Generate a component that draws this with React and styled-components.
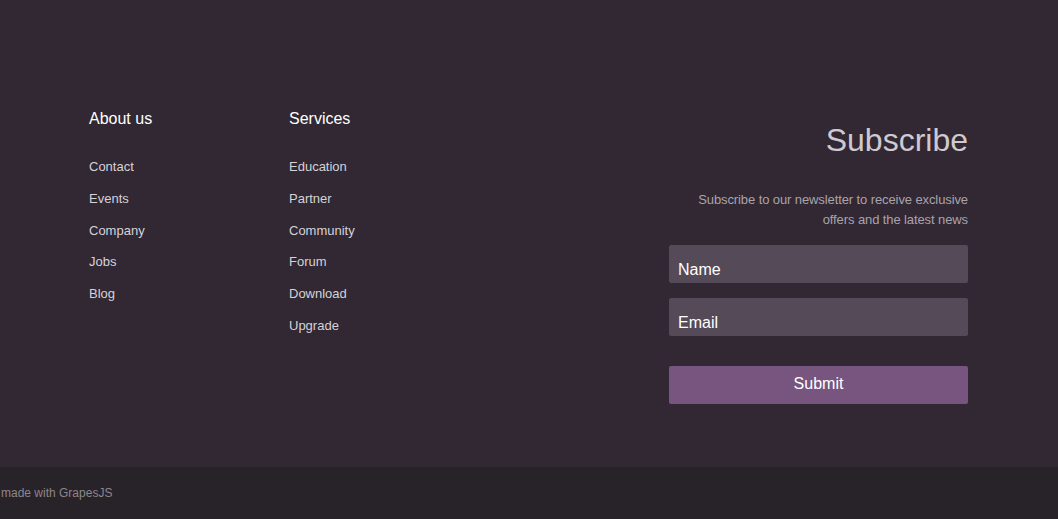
import React from "react";
import styled, { createGlobalStyle } from "styled-components";

const Global = createGlobalStyle`
  html, body { margin: 0; padding: 0; background: #312833; }
  body { font-family: "Liberation Sans", Arial, Helvetica, sans-serif; }
  * { box-sizing: border-box; }
`;

const Main = styled.section`
  background: #312833;
  display: flex;
  align-items: flex-start;
  padding: 109px 90px 62px 89px;
  height: 467px;
`;

const Column = styled.div`
  width: 200px;
  display: flex;
  flex-direction: column;
`;

const ColTitle = styled.h4`
  margin: 0;
  font-size: 16px;
  line-height: 20px;
  font-weight: 400;
  color: #ffffff;
`;

const LinkList = styled.ul`
  list-style: none;
  margin: 22px 0 0;
  padding: 0;
`;

const LinkItem = styled.li`
  font-size: 13px;
  line-height: 31.8px;
  height: 31.8px;
  color: #d6d2d7;
`;

const Spacer = styled.div`
  flex: 1;
`;

const Subscribe = styled.div`
  width: 299px;
  margin-top: 11px;
  display: flex;
  flex-direction: column;
  text-align: right;
`;

const SubTitle = styled.h2`
  margin: 0;
  font-size: 32px;
  line-height: 40px;
  font-weight: 400;
  color: #cfc9d0;
`;

const SubDesc = styled.p`
  margin: 30px 0 0;
  font-size: 13px;
  line-height: 20px;
  letter-spacing: -0.1px;
  color: #aaa3ac;
`;

const Form = styled.form`
  margin-top: 15px;
  display: flex;
  flex-direction: column;
`;

const Field = styled.input`
  height: 38px;
  width: 100%;
  border: none;
  border-radius: 2px;
  background: #554b58;
  color: #ffffff;
  font-family: inherit;
  font-size: 16px;
  padding: 11px 9px 0;
  margin-bottom: ${(p) => p.$gap}px;
  outline: none;
  &::placeholder { color: #ffffff; opacity: 1; }
`;

const SubmitButton = styled.button`
  height: 38px;
  width: 100%;
  border: none;
  border-radius: 2px;
  background: #77557f;
  color: #ffffff;
  font-family: inherit;
  font-size: 16px;
  line-height: 18px;
  padding: 0 0 3px;
  cursor: pointer;
`;

const Under = styled.footer`
  background: #282229;
  height: 52px;
  display: flex;
  align-items: center;
  padding: 0 0 0 1px;
  font-size: 12px;
  color: #8c868d;
`;

const about = ["Contact", "Events", "Company", "Jobs", "Blog"];
const services = ["Education", "Partner", "Community", "Forum", "Download", "Upgrade"];

export default function App() {
  return (
    <>
      <Global />
      <Main>
        <Column>
          <ColTitle>About us</ColTitle>
          <LinkList>
            {about.map((l) => (
              <LinkItem key={l}>{l}</LinkItem>
            ))}
          </LinkList>
        </Column>
        <Column>
          <ColTitle>Services</ColTitle>
          <LinkList>
            {services.map((l) => (
              <LinkItem key={l}>{l}</LinkItem>
            ))}
          </LinkList>
        </Column>
        <Spacer />
        <Subscribe>
          <SubTitle>Subscribe</SubTitle>
          <SubDesc>
            Subscribe to our newsletter to receive exclusive
            <br />
            offers and the latest news
          </SubDesc>
          <Form onSubmit={(e) => e.preventDefault()}>
            <Field placeholder="Name" $gap={15} />
            <Field placeholder="Email" $gap={30} />
            <SubmitButton type="submit">Submit</SubmitButton>
          </Form>
        </Subscribe>
      </Main>
      <Under>made with GrapesJS</Under>
    </>
  );
}
